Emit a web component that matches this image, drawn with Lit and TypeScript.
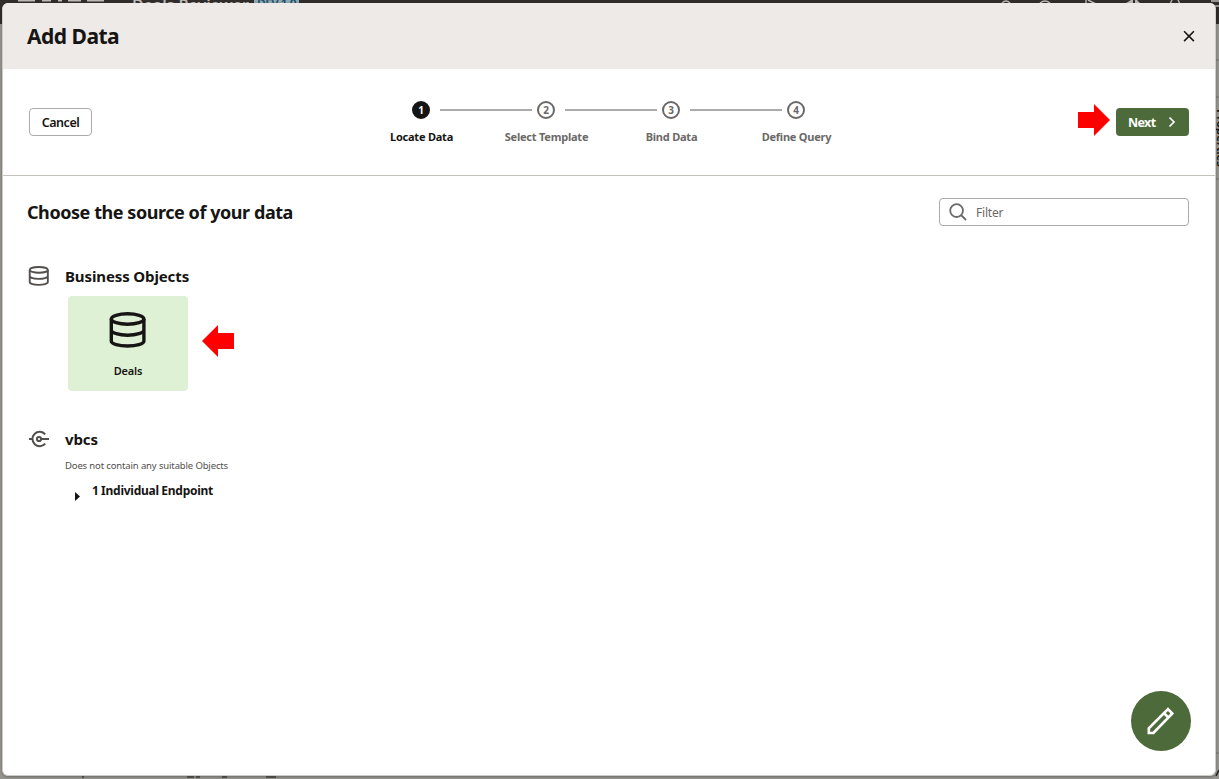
import { LitElement, html, css } from "lit";
import { customElement, property } from "lit/decorators.js";

@customElement("db-icon")
class DbIcon extends LitElement {
  @property({ type: Number }) stroke = 2;
  static styles = css`
    :host { display: block; }
    svg { display: block; width: 100%; height: 100%; overflow: visible; }
  `;
  render() {
    return html`<svg viewBox="0 0 36 36" fill="none" stroke="currentColor" stroke-width=${this.stroke}>
      <ellipse cx="17.6" cy="7" rx="16.3" ry="5.2" />
      <path d="M1.3 7V29C1.3 32 9 34 17.6 34S33.9 32 33.9 29V7M1.3 18C1.3 21 9 23.2 17.6 23.2S33.9 21 33.9 18" />
    </svg>`;
  }
}

@customElement("step-train")
class StepTrain extends LitElement {
  steps = ["Locate Data", "Select Template", "Bind Data", "Define Query"];
  static styles = css`
    :host { display: block; }
    .train { display: grid; grid-template-columns: repeat(4, 125px); }
    .step { display: flex; flex-direction: column; align-items: center; color: #6b6967; }
    .row { width: 125px; display: grid; grid-template-columns: 49px 18px 1fr; column-gap: 5px; align-items: center; }
    .line { height: 2px; background: #acabaa; }
    .after { margin-left: 5px; }
    .none { background: transparent; }
    .dot { box-sizing: border-box; width: 18px; height: 18px; border: 2px solid #6b6967; border-radius: 50%; font-size: 10px; font-weight: 700; line-height: 14px; text-align: center; }
    .label { margin: 9px 0 0 2px; font-size: 11px; line-height: 18px; font-weight: 700; white-space: nowrap; letter-spacing: -0.22px; }
    .current { color: #161513; }
    .current .dot { background: #161513; border-color: #161513; color: #fff; }
  `;
  render() {
    return html`<div class="train">
      ${this.steps.map((label, i) => html`<div class="step ${i === 0 ? "current" : ""}">
        <div class="row">
          <span class="line ${i === 0 ? "none" : ""}"></span>
          <span class="dot">${i + 1}</span>
          <span class="line after ${i === 3 ? "none" : ""}"></span>
        </div>
        <span class="label">${label}</span>
      </div>`)}
    </div>`;
  }
}

@customElement("app-root")
class AppRoot extends LitElement {
  static styles = css`
    :host { display: block; position: relative; width: 1219px; height: 779px; overflow: hidden; background: #979590; font-family: "Noto Sans", sans-serif; color: #161513; }
    * { box-sizing: border-box; }
    .behind { position: absolute; inset: 0; overflow: hidden; }
    .topbar { height: 24px; background: #312d2a; }
    .app-name { position: absolute; left: 132px; top: -6px; font-size: 16px; line-height: 22px; font-weight: 600; color: #bcb9b6; white-space: nowrap; letter-spacing: -0.1px; }
    .version { position: absolute; left: 254px; top: -3px; height: 17px; padding: 0 3px; font-size: 12px; line-height: 14px; font-weight: 600; color: #1f4f68; background: #8fa9b5; white-space: nowrap; letter-spacing: -0.6px; }
    .side { position: absolute; left: 1214px; top: 109px; font-size: 12px; line-height: 14px; writing-mode: vertical-rl; color: #161513; font-weight: 600; letter-spacing: -0.3px; }
    .art { position: absolute; left: 0; top: 0; }
    .dialog { position: absolute; left: 2px; top: 3px; width: 1214px; height: 773px; border-radius: 6px; border: 1px solid #cfcdca; border-top: 0; background: #fff; overflow: hidden; display: flex; flex-direction: column; box-shadow: 0 1px 3px rgba(0,0,0,.3); }
    .head { height: 66px; flex: none; background: #eeeae7; display: flex; align-items: center; justify-content: space-between; padding: 0 19px 0 24px; }
    h1, h2, h3, p { margin: 0; white-space: nowrap; }
    h1 { font-size: 21px; line-height: 28px; font-weight: 700; letter-spacing: -0.5px; }
    .nav { height: 107px; flex: none; border-bottom: 1px solid #c4c3bd; display: grid; grid-template-columns: 355px 500px 1fr; padding-right: 26px; align-items: start; }
    .cancel { justify-self: start; margin: 39px 0 0 26px; width: 63px; height: 28px; border: 1px solid #acabaa; border-radius: 4px; font-size: 12.5px; line-height: 28px; font-weight: 600; text-align: center; letter-spacing: -0.45px; }
    step-train { margin-top: 32px; }
    .go { justify-self: end; display: flex; margin-top: 35px; gap: 6px; }
    .next { margin-top: 4px; width: 73px; height: 28px; border-radius: 4px; background: #4c6a3a; color: #fff; display: flex; align-items: center; justify-content: space-between; padding: 0 13px 0 12px; font-size: 12.5px; font-weight: 700; letter-spacing: -0.65px; }
    svg { display: block; flex: none; }
    .title { display: flex; justify-content: space-between; align-items: center; height: 28px; margin: 22px 26px 0 24px; flex: none; }
    h2 { font-size: 18px; line-height: 26px; font-weight: 700; letter-spacing: -0.44px; }
    .filter { width: 250px; height: 28px; border: 1px solid #acabaa; border-radius: 4px; display: flex; align-items: center; gap: 9px; padding-left: 9px; font-size: 12px; color: #6b6967; letter-spacing: -0.2px; }
    .group { display: grid; grid-template-columns: 20px 1fr; column-gap: 16px; margin-left: 26px; align-items: center; }
    .bo { margin-top: 39px; }
    .gi { width: 20px; height: 20px; color: #524f4c; }
    h3 { font-size: 15px; line-height: 22px; font-weight: 700; letter-spacing: -0.12px; }
    .tile-row { display: flex; align-items: flex-start; gap: 14px; margin: 9px 0 0 65px; }
    .tile-row > svg { margin-top: 29px; }
    .tile { width: 120px; height: 95px; border-radius: 4px; background: #dff1d5; display: flex; flex-direction: column; align-items: center; padding-top: 16px; }
    .tile db-icon { width: 36px; height: 36px; }
    .tile span { margin-top: 15px; font-size: 11px; line-height: 16px; font-weight: 600; letter-spacing: -0.2px; }
    .vb { margin-top: 37px; }
    .note { margin: 9px 0 0 62px; font-size: 9.5px; line-height: 14px; color: #524f4c; letter-spacing: -0.14px; }
    .endpoint { display: flex; margin: 9px 0 0 72px; gap: 12px; font-size: 12px; line-height: 18px; font-weight: 700; white-space: nowrap; letter-spacing: -0.25px; word-spacing: -0.4px; }
    .endpoint svg { margin-top: 10px; }
    .fab { position: absolute; right: 24px; bottom: 24px; width: 60px; height: 60px; border-radius: 50%; background: #4c6a3a; display: grid; place-items: center; }
  `;
  render() {
    return html`
      <div class="behind">
        <div class="topbar"></div>
        <span class="app-name">Deals Reviewer</span>
        <span class="version">DEV 1.0</span>
        <span class="side">Properties</span>
        <svg class="art" width="1219" height="779" viewBox="0 0 1219 779" fill="none">
          <g stroke="#bcb9b6" stroke-width="1.4">
            <path d="M18 .7H35M42 .7H51M58 .7H62M68 .7H81M87 .7H104" />
            <path d="M1002 3Q1006 -1 1010 3M1040 3Q1045 -1 1050 3M1086 0V4M1088 0L1096 4M1170 4L1172 0M1178 0L1180 4" />
            <path d="M1211 1H1219M1211 6H1219" />
          </g>
          <path d="M1126 3L1131 0H1133V3ZM1135 0H1137L1140 3H1135Z" fill="#bcb9b6" />
          <path d="M1216 60H1219M1216 97H1219M1216 179H1219M1216 753H1219" stroke="#777571" />
          <path d="M82 777H84M187 777H194M196 777H200M222 777H227M266 777H276" stroke="#5a5754" stroke-width="2" />
          <path d="M1216 776L1219 770" stroke="#24211f" stroke-width="1.5" />
        </svg>
      </div>
      <section class="dialog">
        <header class="head">
          <h1>Add Data</h1>
          <svg width="14" height="14" viewBox="0 0 14 14" stroke="#161513" stroke-width="1.6"><path d="M2.1 2.3L11.9 12.1M11.9 2.3L2.1 12.1" /></svg>
        </header>
        <div class="nav">
          <div class="cancel">Cancel</div>
          <step-train></step-train>
          <div class="go">
            <svg width="32" height="32" viewBox="0 0 32 32"><path d="M0 8H16V0L32 16L16 32V24H0Z" fill="#fe0000" /></svg>
            <div class="next">Next<svg width="8" height="12" viewBox="0 0 8 12" fill="none" stroke="#fff" stroke-width="1.7"><path d="M1.5 1.5L6 6L1.5 10.5" /></svg></div>
          </div>
        </div>
        <div class="title">
          <h2>Choose the source of your data</h2>
          <div class="filter">
            <svg width="18" height="18" viewBox="0 0 18 18" fill="none" stroke="#6b6967" stroke-width="1.8"><circle cx="7.6" cy="7.6" r="6.4" /><path d="M12 12L17 17" /></svg>
            <span>Filter</span>
          </div>
        </div>
        <div class="group bo"><db-icon class="gi" .stroke=${3.4}></db-icon><h3>Business Objects</h3></div>
        <div class="tile-row">
          <div class="tile"><db-icon .stroke=${3.4}></db-icon><span>Deals</span></div>
          <svg width="32" height="32" viewBox="0 0 32 32"><path d="M32 8H16V0L0 16L16 32V24H32Z" fill="#fe0000" /></svg>
        </div>
        <div class="group vb">
          <svg width="20" height="20" viewBox="0 0 20 20" fill="none" stroke="#524f4c" stroke-width="2">
            <path d="M0 10H3M16.2 5.4A7.2 7.2 0 1 0 16.2 14.6" /><circle cx="10" cy="10" r="2.1" /><path d="M12.1 10H20" />
          </svg>
          <h3>vbcs</h3>
        </div>
        <p class="note">Does not contain any suitable Objects</p>
        <div class="endpoint"><svg width="5" height="9" viewBox="0 0 5 9"><path d="M0 0L5 4.5L0 9Z" fill="#161513" /></svg><span>1 Individual Endpoint</span></div>
        <div class="fab">
          <svg width="28" height="28" viewBox="0 0 28 28" fill="none" stroke="#fff" stroke-width="2.6"><path d="M1.8 26V21.3L21 2.2L25.3 6.5L6.4 26ZM17 6.2L21.3 10.5" /></svg>
        </div>
      </section>`;
  }
}
